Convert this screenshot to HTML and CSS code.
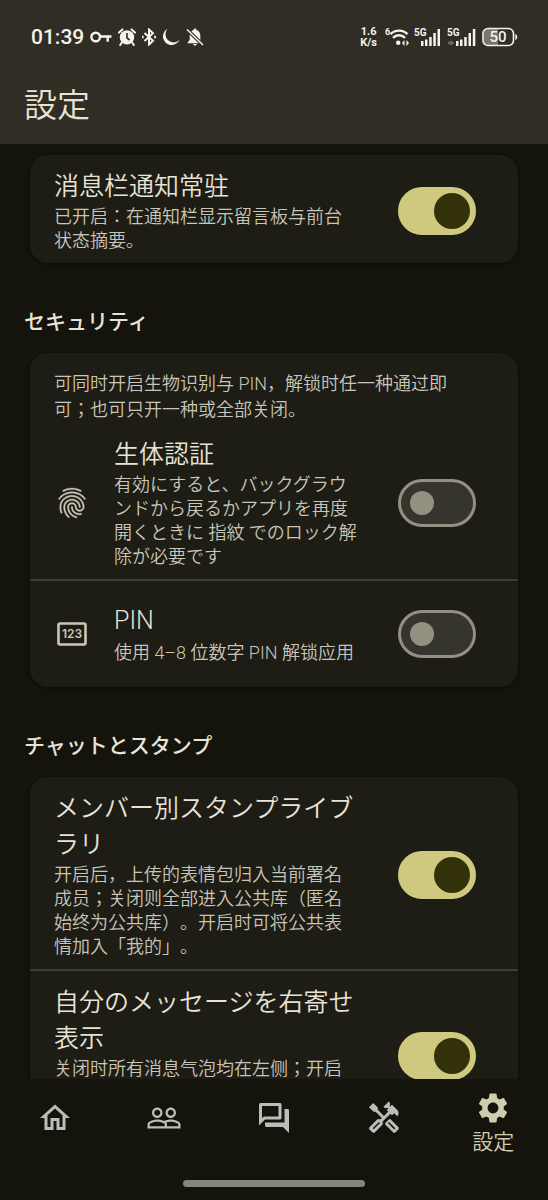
FILE: index.html
```html
<!DOCTYPE html>
<html lang="ja">
<head>
<meta charset="utf-8">
<meta name="viewport" content="width=device-width, initial-scale=1">
<title>設定</title>
<link rel="stylesheet" href="styles.css">
</head>
<body class="app">
<header class="top">
  <div class="status">
    <div class="status-group">
      <span class="clock">01:39</span>
      <svg class="ic-key" width="22" height="14" viewBox="0 0 22 14" fill="none" stroke="currentColor" stroke-width="2.4"><circle cx="5.7" cy="7" r="4.3"/><path d="M10 6.5h11.5M17.7 6.5v5.3"/></svg>
      <svg class="ic-alarm" width="18" height="18" viewBox="0 0 18 18"><circle cx="9" cy="9.4" r="7.2" fill="currentColor"/><path d="M1 4.6 4.4 1.4M17 4.6 13.6 1.4M3.8 14.5 2.2 17M14.2 14.5l1.6 2.500" stroke="currentColor" stroke-width="2" stroke-linecap="round"/><path d="M9 5v5l2.600 2" fill="none" stroke="#302d24" stroke-width="1.600"/></svg>
      <svg class="ic-bt" width="14" height="18" viewBox="0 0 14 18" fill="none" stroke="currentColor" stroke-width="2"><path d="M2.500 5 11 12.800 7 16.500v-15L11 5.200 2.500 13"/><path d="M.6 7.800v2.400M13.200 7.800v2.400"/></svg>
      <svg class="ic-moon" width="18" height="18" viewBox="0 0 18 18" fill="currentColor"><path d="M5.600.8A8.600 8.600 0 1 0 17.500 11.800 6.700 6.700 0 0 1 5.600.8z"/></svg>
      <svg class="ic-bell" width="18" height="18" viewBox="0 0 18 18"><path d="M9 .5c.9 0 1.400.6 1.400 1.400 2.400.7 3.900 2.700 3.900 5.200V12l2 2.200v1H1.700v-1l2-2.200V7.100c0-2.500 1.500-4.500 3.900-5.200C7.600 1.100 8.100.5 9 .5zM7.200 16h3.600c-.2 1-.9 1.600-1.800 1.600S7.400 17 7.200 16z" fill="currentColor"/><path d="M1 1.500 17 17" stroke="#302d24" stroke-width="3.600"/><path d="M1 1.500 17 17" stroke="currentColor" stroke-width="1.500"/></svg>
    </div>
    <div class="status-group status-right">
      <span class="speed"><span>1.6</span><span>K/s</span></span>
      <svg class="ic-wifi" width="24" height="20" viewBox="0 0 24 20" fill="none" stroke="currentColor" stroke-width="2.400"><path d="M5.500 7.200a12 12 0 0 1 17 0M8 10.800a8.300 8.300 0 0 1 12 0"/><circle cx="13.200" cy="15.800" r="2.200" fill="currentColor" stroke="none"/><path d="m17 16 2.500-3v6zM24 16l-2.500-3v6z" fill="currentColor" stroke="none"/><text x="0" y="8" class="tiny">6</text></svg>
      <svg class="ic-cell" width="28" height="20" viewBox="0 0 28 20" fill="currentColor"><text x="0" y="9" class="net">5G</text><path d="M7 14h2.500v5H7zM11 12.500h2.500V19H11zM15.200 10h2.500v9h-2.500zM19.300 6h2.500v13h-2.500zM23.500 2H26v17h-2.500z"/></svg>
      <svg class="ic-cell" width="30" height="20" viewBox="0 0 30 20" fill="currentColor"><text x="0" y="9" class="net">5G</text><path d="m.5 16 3-2.500v5zM7 16l-3-2.500v5z" opacity=".35"/><path d="M9 14h2.500v5H9zM13 12.500h2.500V19H13zM17.200 10h2.500v9h-2.500zM21.500 6H24v13h-2.500zM25.800 2h2.500v17h-2.500z"/></svg>
      <svg class="ic-batt" width="36" height="20" viewBox="0 0 36 20"><path d="M6 2h10v16H6a4 4 0 0 1-4-4V6a4 4 0 0 1 4-4z" fill="#79766d"/><rect x="1" y="1.500" width="30.500" height="17" rx="5" fill="none" stroke="currentColor" stroke-width="1.600"/><path d="M33.300 7c1.400.6 1.900 1.600 1.900 3s-.5 2.400-1.900 3z" fill="currentColor"/><text x="16" y="15" text-anchor="middle" class="charge">50</text></svg>
    </div>
  </div>
  <h1 class="page-title">設定</h1>
</header>

<main class="content">
  <section class="card">
    <div class="row">
      <label class="text" for="s1"><span class="title">消息栏通知常驻</span><span class="sub">已开启：在通知栏显示留言板与前台状态摘要。</span></label>
      <input class="switch" id="s1" type="checkbox" role="switch" checked>
    </div>
  </section>

  <h2 class="section-title">セキュリティ</h2>
  <section class="card">
    <p class="note">可同时开启生物识别与 PIN，解锁时任一种通过即可；也可只开一种或全部关闭。</p>
    <div class="row">
      <svg class="icon" viewBox="0 0 24 24" fill="currentColor" stroke="currentColor" stroke-width=".2"><path d="M17.810 4.470c-.08 0-.16-.02-.23-.06C15.660 3.420 14 3 12.010 3c-1.980 0-3.860.47-5.570 1.410-.24.13-.54.04-.68-.2-.13-.24-.04-.55.2-.68C7.820 2.520 9.860 2 12.010 2c2.130 0 3.990.47 6.030 1.520.25.13.34.43.21.67-.09.18-.26.28-.44.28zM3.500 9.720c-.1 0-.2-.03-.29-.09-.23-.16-.28-.47-.12-.7.99-1.400 2.250-2.500 3.750-3.270C9.980 4.040 14 4.030 17.150 5.650c1.500.77 2.760 1.860 3.750 3.250.16.22.11.54-.12.7-.23.16-.54.11-.7-.12-.9-1.260-2.040-2.250-3.390-2.940-2.870-1.470-6.540-1.470-9.400.01-1.360.7-2.500 1.700-3.400 2.960-.08.14-.23.21-.39.21zm6.250 12.070c-.13 0-.26-.05-.35-.15-.87-.87-1.340-1.430-2.010-2.640-.69-1.230-1.050-2.730-1.050-4.340 0-2.970 2.540-5.390 5.660-5.390s5.660 2.420 5.660 5.390c0 .28-.22.5-.5.5s-.5-.22-.5-.5c0-2.420-2.090-4.390-4.660-4.390-2.570 0-4.660 1.970-4.660 4.390 0 1.440.32 2.770.93 3.850.64 1.150 1.080 1.640 1.850 2.420.19.2.19.51 0 .71-.11.1-.24.15-.37.15zm7.170-1.850c-1.190 0-2.240-.3-3.100-.89-1.490-1.010-2.380-2.650-2.380-4.390 0-.28.22-.5.5-.5s.5.22.5.5c0 1.410.72 2.740 1.940 3.560.71.48 1.540.71 2.540.71.24 0 .64-.03 1.040-.1.27-.05.53.13.58.41.05.27-.13.53-.41.58-.57.11-1.070.12-1.210.12zM14.910 22c-.04 0-.09-.01-.13-.02-1.590-.44-2.630-1.030-3.720-2.100-1.400-1.390-2.170-3.240-2.170-5.220 0-1.620 1.380-2.940 3.080-2.940 1.700 0 3.080 1.320 3.080 2.940 0 1.070.93 1.940 2.080 1.940s2.080-.87 2.080-1.940c0-3.770-3.250-6.830-7.250-6.830-2.840 0-5.440 1.580-6.610 4.030-.39.81-.59 1.760-.59 2.800 0 .78.07 2.010.67 3.610.1.26-.03.55-.29.64-.26.1-.55-.04-.64-.29-.49-1.310-.73-2.610-.73-3.960 0-1.200.23-2.290.68-3.240 1.330-2.790 4.280-4.600 7.510-4.600 4.550 0 8.250 3.510 8.250 7.830 0 1.620-1.380 2.940-3.080 2.940s-3.080-1.320-3.080-2.940c0-1.070-.93-1.940-2.080-1.940s-2.080.87-2.080 1.940c0 1.710.66 3.310 1.870 4.510.95.94 1.860 1.460 3.270 1.850.27.07.42.35.35.61-.05.23-.26.38-.47.38z"/></svg>
      <label class="text" for="s2"><span class="title">生体認証</span><span class="sub">有効にすると、バックグラウンドから戻るかアプリを再度開くときに 指紋 でのロック解除が必要です</span></label>
      <input class="switch" id="s2" type="checkbox" role="switch">
    </div>
    <div class="row row-short">
      <svg class="icon" viewBox="0 0 36 36"><rect x="4.500" y="7.500" width="27" height="21" rx="1.500" fill="none" stroke="currentColor" stroke-width="2.600"/><text x="18" y="22" text-anchor="middle" class="pin">123</text></svg>
      <label class="text" for="s3"><span class="title">PIN</span><span class="sub">使用 4–8 位数字 PIN 解锁应用</span></label>
      <input class="switch" id="s3" type="checkbox" role="switch">
    </div>
  </section>

  <h2 class="section-title">チャットとスタンプ</h2>
  <section class="card">
    <div class="row">
      <label class="text" for="s4"><span class="title">メンバー別スタンプライブラリ</span><span class="sub">开启后，上传的表情包归入当前署名成员；关闭则全部进入公共库（匿名始终为公共库）。开启时可将公共表情加入「我的」。</span></label>
      <input class="switch" id="s4" type="checkbox" role="switch" checked>
    </div>
    <div class="row row-tall">
      <label class="text" for="s5"><span class="title">自分のメッセージを右寄せ表示</span><span class="sub">关闭时所有消息气泡均在左侧；开启</span></label>
      <input class="switch" id="s5" type="checkbox" role="switch" checked>
    </div>
  </section>
</main>

<footer class="bottom">
  <nav class="tabs">
    <button class="tab" type="button" aria-label="ホーム"><svg class="icon" viewBox="0 0 24 24" fill="currentColor"><path d="M12 5.690l5 4.500V18h-2v-6H9v6H7v-7.810l5-4.500M12 3L2 12h3v8h6v-6h2v6h6v-8h3L12 3z"/></svg></button>
    <button class="tab" type="button" aria-label="メンバー"><svg class="icon" viewBox="0 0 24 24" fill="currentColor"><path d="M16.500 13c-1.200 0-3.070.34-4.500 1-1.430-.67-3.300-1-4.500-1C5.330 13 1 14.080 1 16.250V19h22v-2.750c0-2.170-4.330-3.250-6.500-3.250zm-4 4.500h-10v-1.250c0-.54 2.560-1.750 5-1.750s5 1.210 5 1.750v1.250zm9 0H14v-1.250c0-.46-.2-.86-.52-1.220.88-.3 1.960-.53 3.020-.53 2.440 0 5 1.210 5 1.750v1.250zM7.500 12c1.930 0 3.500-1.570 3.500-3.500S9.430 5 7.500 5 4 6.570 4 8.500 5.570 12 7.500 12zm0-5.500c1.100 0 2 .9 2 2s-.9 2-2 2-2-.9-2-2 .9-2 2-2zm9 5.500c1.930 0 3.500-1.570 3.500-3.500S18.430 5 16.500 5 13 6.570 13 8.500s1.570 3.500 3.500 3.500zm0-5.500c1.100 0 2 .9 2 2s-.9 2-2 2-2-.9-2-2 .9-2 2-2z"/></svg></button>
    <button class="tab" type="button" aria-label="チャット"><svg class="icon" viewBox="0 0 24 24" fill="currentColor"><path d="M15 4v7H5.170L4 12.170V4h11m1-2H3c-.55 0-1 .45-1 1v14l4-4h10c.55 0 1-.45 1-1V3c0-.55-.45-1-1-1zm5 4h-2v9H6v2c0 .55.45 1 1 1h11l4 4V7c0-.55-.45-1-1-1z"/></svg></button>
    <button class="tab" type="button" aria-label="ツール"><svg class="icon" viewBox="0 0 24 24" fill="currentColor"><path d="M21.670 18.170l-5.300-5.300h-.99l-2.540 2.540v.99l5.300 5.300c.39.39 1.020.39 1.410 0l2.120-2.120c.39-.38.39-1.020 0-1.410zm-2.830 1.420l-4.240-4.240.71-.71 4.240 4.240-.71.71z"/><path d="M17.340 10.190l1.410-1.410 2.120 2.120c1.170-1.170 1.170-3.070 0-4.240l-3.540-3.540-1.410 1.410V1.710L15.220 1l-3.540 3.540.71.71h2.830l-1.410 1.410 1.060 1.060-2.890 2.890-4.130-4.130V5.060L4.830 2.040 2 4.870 5.030 7.900h1.410l4.130 4.130-.85.85H7.600l-5.300 5.300c-.39.39-.39 1.020 0 1.410l2.120 2.120c.39.39 1.020.39 1.410 0l5.300-5.300v-2.120l5.150-5.150 1.060 1.050zm-7.980 5.150l-4.240 4.240-.71-.71 4.240-4.240.71.71z"/></svg></button>
    <button class="tab tab-active" type="button"><svg class="icon" viewBox="0 0 24 24" fill="currentColor"><path d="M19.140 12.940c.04-.3.060-.61.060-.94 0-.32-.02-.64-.07-.94l2.030-1.580c.18-.14.23-.41.12-.61l-1.920-3.320c-.12-.22-.37-.29-.59-.22l-2.390.96c-.5-.38-1.030-.7-1.620-.94l-.36-2.540c-.04-.24-.24-.41-.48-.41h-3.840c-.24 0-.43.17-.47.41l-.36 2.540c-.59.24-1.130.57-1.620.94l-2.390-.96c-.22-.08-.47 0-.59.22L2.740 8.870c-.12.21-.08.47.12.61l2.030 1.580c-.05.3-.09.63-.09.94s.02.64.07.94l-2.030 1.580c-.18.14-.23.41-.12.61l1.920 3.320c.12.22.37.29.59.22l2.390-.96c.5.38 1.030.7 1.620.94l.36 2.540c.05.24.24.41.48.41h3.840c.24 0 .44-.17.47-.41l.36-2.540c.59-.24 1.130-.56 1.620-.94l2.390.96c.22.08.47 0 .59-.22l1.920-3.320c.12-.22.07-.47-.12-.61l-2.010-1.580zM12 15.600c-1.980 0-3.600-1.620-3.600-3.600s1.620-3.600 3.600-3.600 3.600 1.620 3.600 3.600-1.620 3.600-3.600 3.600z"/></svg><span>設定</span></button>
  </nav>
  <div class="home-bar"></div>
</footer>
</body>
</html>
```

FILE: styles.css
```css
* { box-sizing: border-box; }

.app {
  margin: 0;
  height: 100vh;
  display: flex;
  flex-direction: column;
  background: #14140c;
  color: #e7e3d6;
  font-family: Roboto, "Noto Sans CJK JP", "Noto Sans CJK SC", sans-serif;
  font-weight: 350;
  text-spacing-trim: space-all;
}

/* Top bar */
.top {
  flex: none;
  background: #302d24;
  padding: 24px 24px 14px;
}
.status {
  display: flex;
  justify-content: space-between;
  align-items: center;
  height: 26px;
  padding: 0 6px 0 7px;
  color: #f4f3ef;
}
.status-group { display: flex; align-items: center; gap: 6px; }
.status-right { gap: 5px; }
.clock { font-size: 21px; line-height: 26px; font-weight: 500; }
.speed {
  display: flex;
  flex-direction: column;
  align-items: center;
  margin-right: 3px;
  font: 700 11px/11px Roboto, sans-serif;
}
.tiny { font: 700 9px Roboto, sans-serif; fill: currentColor; stroke: none; }
.net { font: 700 10px Roboto, sans-serif; fill: currentColor; }
.charge { font: 500 15px Roboto, sans-serif; fill: currentColor; }
.page-title {
  margin: 32px 0 0;
  font-size: 33px;
  line-height: 48px;
  font-weight: 350;
}

/* Scrolling list */
.content {
  flex: 1;
  min-height: 0;
  overflow: hidden;
  padding-top: 11px;
}
.card {
  margin: 0 30px;
  border-radius: 18px;
  background: #1d1c15;
  box-shadow: 0 1px 3px #0c0c06;
}
.section-title {
  margin: 0;
  padding: 47px 24px 19px;
  font-size: 21px;
  line-height: 24px;
  font-weight: 500;
}
.note {
  margin: 0;
  padding: 18px 36px 0 24px;
  font-size: 18px;
  line-height: 26px;
  color: #c9c6b8;
}
.row {
  display: flex;
  align-items: center;
  gap: 24px;
  padding: 14px 42px 10px 24px;
}
.row + .row { border-top: 2px solid #3f3e34; }
.row-short { padding-top: 22px; padding-bottom: 22px; }
.row-short .text { gap: 2px; }
.row-tall { min-height: 168px; }
.row-tall .text { align-self: flex-start; }
.text { flex: 1; min-width: 0; display: flex; flex-direction: column; }
.title { font-size: 25px; line-height: 36px; }
.sub { font-size: 18px; line-height: 24px; color: #c9c6b8; }
.icon { flex: none; width: 36px; height: 36px; color: #cac7b8; }
.pin { font: 600 12px Inter, sans-serif; fill: currentColor; }

/* Switch */
.switch {
  appearance: none;
  flex: none;
  display: flex;
  align-items: center;
  width: 78px;
  height: 48px;
  margin: 0 0 0 17px;
  padding: 0 9px;
  border: 3px solid #939082;
  border-radius: 24px;
  background: #36352d;
}
.switch::before {
  content: "";
  width: 24px;
  height: 24px;
  border-radius: 50%;
  background: #939082;
}
.switch:checked {
  justify-content: flex-end;
  padding: 0 3px;
  border-color: #cec97f;
  background: #cec97f;
}
.switch:checked::before { width: 36px; height: 36px; background: #333109; }

/* Bottom navigation */
.bottom {
  flex: none;
  display: flex;
  flex-direction: column;
  align-items: center;
  padding-bottom: 13px;
}
.tabs { display: flex; width: 100%; height: 101px; padding-top: 11px; }
.tab {
  flex: 1;
  display: flex;
  flex-direction: column;
  align-items: center;
  margin: 0;
  padding: 10px 0 0;
  border: 0;
  background: none;
  color: #bdbcb8;
  font: inherit;
  font-size: 21px;
  line-height: 32px;
}
.tab .icon { color: inherit; }
.tab-active { padding-top: 0; color: #d0ccae; }
.home-bar { width: 182px; height: 7px; border-radius: 4px; background: #85847f; }
```
